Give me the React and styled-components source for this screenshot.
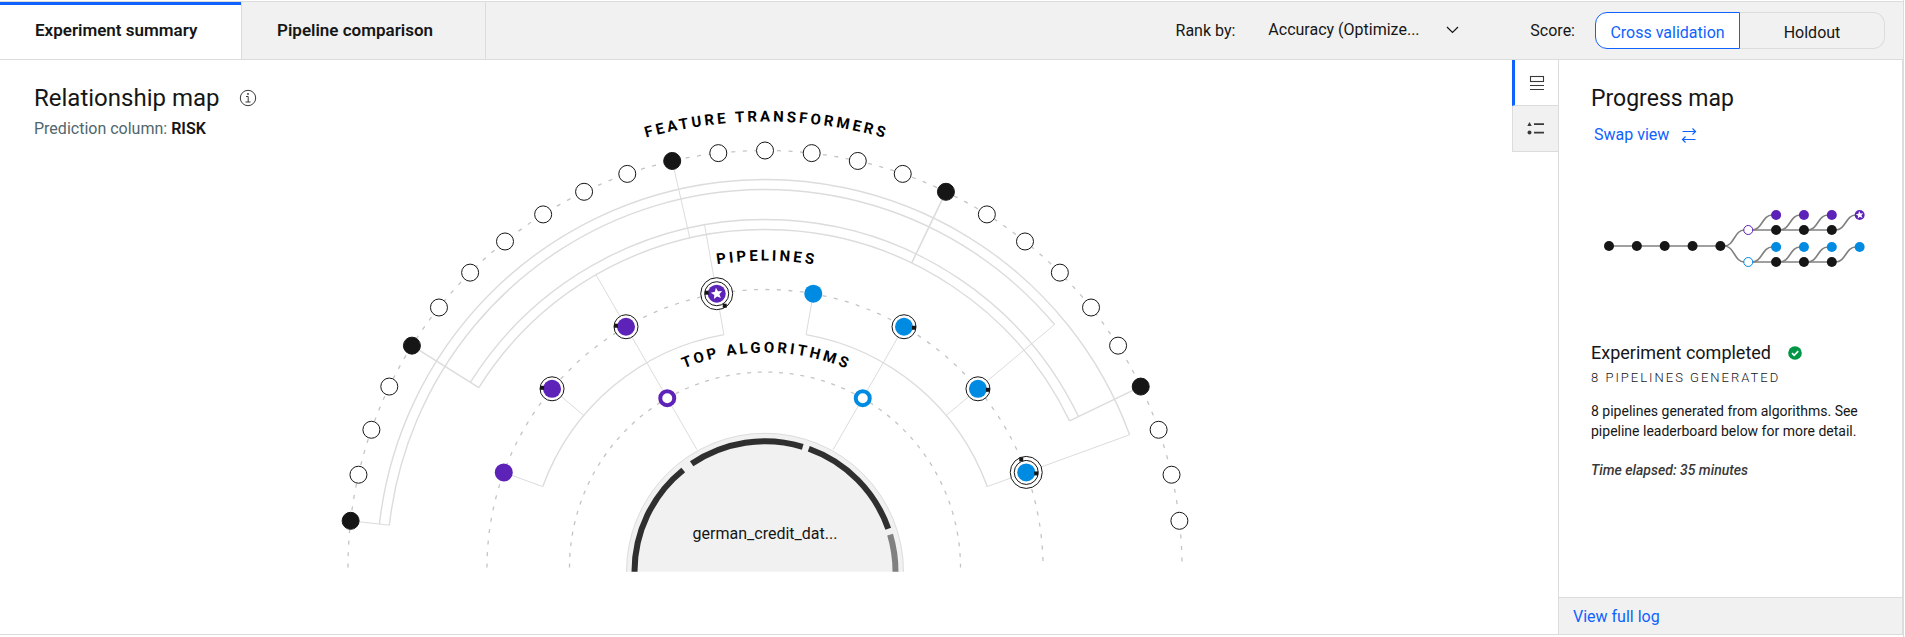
import React from 'react';
import styled, { createGlobalStyle } from 'styled-components';

const c = {
  ink: '#161616',
  soft: '#393939',
  blue: '#0f62fe',
  line: '#dcdcdc',
  shade: '#f1f1f1',
  purple: '#5d22b8',
  sky: '#008be3',
  green: '#009645',
};

const GlobalStyle = createGlobalStyle`
  *, *::before, *::after { box-sizing: border-box; }
  body {
    margin: 0;
    background: #fff;
    color: ${c.ink};
    font-family: Roboto, "Noto Sans", sans-serif;
    font-size: 16px;
  }
  button, select { font: inherit; color: inherit; }
`;

const Page = styled.div`
  display: flex;
  flex-direction: column;
  min-height: 100vh;
  margin-right: 1px;
  padding: 1px 0 2px;
  border-right: 1px solid ${c.line};
`;

const Header = styled.header`
  display: flex;
  height: 59px;
  background: ${c.shade};
  border: solid ${c.line};
  border-width: 1px 0;
`;

const Tabs = styled.nav`
  display: flex;
`;

const Tab = styled.button`
  padding: 0 0 2px 35px;
  width: ${(p) => (p.$active ? 242 : 244)}px;
  text-align: left;
  font-size: 17px;
  font-weight: 600;
  background: ${(p) => (p.$active ? '#fff' : 'transparent')};
  border: 0 solid ${c.line};
  border-right-width: 1px;
  box-shadow: ${(p) => (p.$active ? `inset 0 3px 0 ${c.blue}` : 'none')};
`;

const Controls = styled.div`
  display: flex;
  align-items: center;
  margin-left: auto;
  padding-right: 18px;
`;

const Label = styled.label`
  padding-bottom: 1px;
  margin-right: ${(p) => p.$gap}px;
`;

const SelectBox = styled.div`
  display: flex;
  align-items: center;
  width: 192px;
  margin-right: 70px;
  padding-bottom: 2px;

  svg {
    flex: none;
    margin-left: -16px;
    pointer-events: none;
  }
`;

const Select = styled.select`
  appearance: none;
  width: 100%;
  padding: 0;
  border: 0;
  background: transparent;
`;

const Switch = styled.div`
  display: flex;
  height: 37px;
`;

const SwitchButton = styled.button`
  width: 145px;
  padding: 3px 0 0;
  color: ${(p) => (p.$active ? c.blue : c.ink)};
  background: ${(p) => (p.$active ? '#fff' : 'transparent')};
  border: 1px solid ${(p) => (p.$active ? c.blue : c.line)};
  border-radius: ${(p) => (p.$active ? '12px 0 0 12px' : '0 12px 12px 0')};
  border-left-width: ${(p) => (p.$active ? 1 : 0)}px;
`;

const Body = styled.div`
  display: flex;
  flex: 1;
  border: solid ${c.line};
  border-width: 0 1px 1px 0;
`;

const Main = styled.main`
  display: grid;
  flex: 1;
  min-width: 0;

  > * { grid-area: 1 / 1; }
`;

const MapIntro = styled.div`
  padding: 23px 0 0 34px;
`;

const TitleRow = styled.div`
  display: flex;
  align-items: center;
  gap: 20px;
`;

const Title = styled.h2`
  margin: 0;
  font-size: ${(p) => p.$size}px;
  line-height: 30px;
  font-weight: 400;
`;

const Prediction = styled.p`
  margin: 6px 0 0;
  font-size: 16px;
  line-height: 20px;
  color: #50666d;

  strong { color: ${c.ink}; font-weight: 600; }
`;

const ChartArea = styled.div`
  display: flex;
  justify-content: center;
  padding: 40px 0 0 18px;
`;

const Chart = styled.svg`
  display: block;
  flex: none;
`;

const RingTitle = styled.text`
  font-size: 15px;
  font-weight: 700;
  letter-spacing: 3px;
  fill: #000;
`;

const Rail = styled.div`
  display: flex;
  flex-direction: column;
  flex: none;
  width: 46px;
`;

const RailButton = styled.button`
  display: flex;
  align-items: center;
  justify-content: center;
  height: 46px;
  padding: 0;
  background: ${(p) => (p.$active ? '#fff' : c.shade)};
  border: 0 solid ${c.line};
  border-bottom-width: 1px;
  border-left: ${(p) => (p.$active ? `3px solid ${c.blue}` : `1px solid ${c.line}`)};
`;

const Panel = styled.aside`
  display: flex;
  flex-direction: column;
  flex: none;
  width: 344px;
  border-left: 1px solid ${c.line};
`;

const PanelBody = styled.div`
  flex: 1;
  padding: 24px 32px 0;
`;

const SwapButton = styled.button`
  display: flex;
  align-items: center;
  gap: 12px;
  margin: 10px 0 0 3px;
  padding: 0;
  line-height: 22px;
  color: ${c.blue};
  background: none;
  border: 0;
`;

const ProgressChart = styled.svg`
  display: block;
  margin: 61px 0 70px 10px;
`;

const Status = styled.h3`
  display: flex;
  align-items: center;
  gap: 17px;
  margin: 0;
  font-size: 18px;
  line-height: 24px;
  font-weight: 400;
`;

const Count = styled.p`
  margin: 4px 0 0;
  font-size: 13px;
  line-height: 18px;
  font-weight: 300;
  letter-spacing: 2px;
  color: ${c.ink};
`;

const Note = styled.p`
  margin: 14px 0 0;
  font-size: 14px;
  line-height: 20px;
`;

const Elapsed = styled.p`
  margin: 19px 0 0;
  font-size: 14px;
  line-height: 20px;
  font-weight: 500;
  font-style: italic;
  color: ${c.soft};
`;

const PanelFooter = styled.footer`
  display: flex;
  align-items: center;
  height: 37px;
  padding-left: 14px;
  background: ${c.shade};
  border-top: 1px solid ${c.line};

  a { color: ${c.blue}; text-decoration: none; }
`;

/* Relationship map geometry: every ring shares this centre. */
const CX = 430;
const CY = 467.5;
const STEP = 180 / 28;

const at = (r, deg) => {
  const a = (deg * Math.PI) / 180;
  return [CX + r * Math.sin(a), CY - r * Math.cos(a)];
};

const arcPath = (r, from, to, cy = CY) => {
  const [x1, y1] = at(r, from);
  const [x2, y2] = at(r, to);
  const dy = cy - CY;
  return `M${x1} ${y1 + dy}A${r} ${r} 0 0 1 ${x2} ${y2 + dy}`;
};

const Spoke = ({ deg, from, to, w = 1 }) => {
  const [x1, y1] = at(from, deg);
  const [x2, y2] = at(to, deg);
  return <line x1={x1} y1={y1} x2={x2} y2={y2} stroke={c.line} strokeWidth={w} />;
};

const star = (r) =>
  Array.from({ length: 10 }, (_, i) => {
    const a = (i * Math.PI) / 5;
    const q = i % 2 ? r * 0.45 : r;
    return `${q * Math.sin(a)},${-q * Math.cos(a)}`;
  }).join(' ');

const FILLED = [-13, -9, -2, 4, 10];

const PIPELINES = [
  { deg: -70, color: c.purple, marks: [] },
  { deg: -50, color: c.purple, marks: [[-10, -1]] },
  { deg: -30, color: c.purple, marks: [[-10, -1]] },
  { deg: -10, color: c.purple, marks: [[-10, -1], [8, 12]], best: true },
  { deg: 10, color: c.sky, marks: [] },
  { deg: 30, color: c.sky, marks: [[10, 1]] },
  { deg: 50, color: c.sky, marks: [[10, 1]] },
  { deg: 70, color: c.sky, marks: [[10, 1], [-5, -13]] },
];

const CORE = [
  [-90, -38.8, '#2f2f2f'],
  [-34.2, 16.8, '#2f2f2f'],
  [19.6, 70.8, '#2f2f2f'],
  [73.5, 90, '#808080'],
];
const CORE_Y = 471.7;

function RelationshipMap() {
  return (
    <Chart width="860" height="490" viewBox="0 0 860 490" role="img" aria-label="Relationship map">
      <g fill="none" stroke="#c4c4c4" strokeWidth="1.3" strokeDasharray="4 7.5">
        <path d={arcPath(417, -90, 90)} />
        <path d={arcPath(278, -90, 90)} />
        <path d={arcPath(195.5, -90, 90)} strokeDasharray="4 6.7" />
      </g>

      <g fill="none" stroke={c.line} strokeWidth="1.4">
        <path d={arcPath(388, -13 * STEP, 70)} />
        <path d={arcPath(378, -13 * STEP, 50)} />
        <path d={arcPath(348, -9 * STEP, 10 * STEP)} />
        <path d={arcPath(338, -9 * STEP, 10 * STEP)} />
        <path d={arcPath(236.5, -70, -10)} />
        <path d={arcPath(236.5, 10, 70)} />
      </g>

      <Spoke deg={-13 * STEP} from={417} to={378} />
      <Spoke deg={-9 * STEP} from={417} to={338} w={1.5} />
      <Spoke deg={-2 * STEP} from={417} to={338} />
      <Spoke deg={4 * STEP} from={417} to={338} w={1.6} />
      <Spoke deg={10 * STEP} from={417} to={338} w={1.5} />
      <Spoke deg={-70} from={278} to={236.5} />
      <Spoke deg={-50} from={278} to={236.5} />
      <Spoke deg={-30} from={338} to={136} />
      <Spoke deg={-10} from={348} to={236.5} />
      <Spoke deg={10} from={278} to={236.5} />
      <Spoke deg={30} from={278} to={136} />
      <Spoke deg={50} from={378} to={236.5} />
      <Spoke deg={70} from={388} to={236.5} />

      {Array.from({ length: 27 }, (_, i) => i - 13).map((i) => {
        const [x, y] = at(417, i * STEP);
        return (
          <circle key={i} cx={x} cy={y} r="8.5" stroke={c.ink} fill={FILLED.includes(i) ? c.ink : '#fff'} />
        );
      })}

      {PIPELINES.map(({ deg, color, marks, best }) => {
        const [x, y] = at(278, deg);
        return (
          <g key={deg} transform={`translate(${x} ${y})`}>
            {marks.length > 1 && <circle r="16" fill="#fff" stroke={c.ink} />}
            {marks.length > 0 && <circle r="12" fill="#fff" stroke={c.ink} />}
            <circle r="9" fill={color} />
            {marks.map(([mx, my]) => (
              <rect key={mx} x={mx - 2} y={my - 2} width="4" height="4" fill={c.ink} />
            ))}
            {best && <polygon points={star(6)} fill="#fff" transform="rotate(-8)" />}
          </g>
        );
      })}

      {[[-30, c.purple], [30, c.sky]].map(([deg, color]) => {
        const [x, y] = at(195.5, deg);
        return <circle key={deg} cx={x} cy={y} r="7" fill="#fff" stroke={color} strokeWidth="4" />;
      })}

      <path d={arcPath(138.5, -90, 90, CORE_Y)} fill={c.shade} stroke={c.line} />
      {CORE.map(([from, to, color]) => (
        <path key={from} d={arcPath(130.5, from, to, CORE_Y)} fill="none" stroke={color} strokeWidth="6" />
      ))}
      <text x={CX} y="439" textAnchor="middle" fontSize="16" fill={c.ink}>german_credit_dat...</text>

      <defs>
        <path id="features-arc" d={arcPath(446, -89.8, 90.2)} />
        <path id="pipelines-arc" d={arcPath(307, -89.7, 90.3)} />
        <path id="algorithms-arc" d={arcPath(215, -89.6, 90.4)} />
      </defs>
      <RingTitle textAnchor="middle"><textPath href="#features-arc" startOffset="50%">FEATURE TRANSFORMERS</textPath></RingTitle>
      <RingTitle textAnchor="middle"><textPath href="#pipelines-arc" startOffset="50%">PIPELINES</textPath></RingTitle>
      <RingTitle textAnchor="middle"><textPath href="#algorithms-arc" startOffset="50%">TOP ALGORITHMS</textPath></RingTitle>
    </Chart>
  );
}

const COL = (n) => 8 + n * 27.85;
const BRANCHES = [
  { color: c.purple, top: 8, base: 23, best: true },
  { color: c.sky, top: 40, base: 55 },
];

const curve = (x1, y1, x2, y2) => {
  const mid = (x1 + x2) / 2;
  return `M${x1} ${y1}C${mid} ${y1} ${mid} ${y2} ${x2} ${y2}`;
};

function ProgressMap() {
  return (
    <ProgressChart width="268" height="64" viewBox="0 0 268 64" role="img" aria-label="Progress map">
      <g fill="none" stroke="#808080" strokeWidth="1.6">
        <path d={`M${COL(0)} 39H${COL(4)}`} />
        {BRANCHES.map(({ top, base }) => (
          <g key={base}>
            <path d={curve(COL(4) + 4, 39, COL(5) - 4, base)} />
            <path d={`M${COL(5)} ${base}H${COL(8)}`} />
            {[5, 6, 7, 8].map((n) => (
              <path key={n} d={curve(COL(n) + 4, base, COL(n + 1) - 4, top)} />
            ))}
          </g>
        ))}
      </g>
      {[0, 1, 2, 3, 4].map((n) => <circle key={n} cx={COL(n)} cy="39" r="5" fill={c.ink} />)}
      {BRANCHES.map(({ color, top, base, best }) => (
        <g key={base}>
          <circle cx={COL(5)} cy={base} r="4.5" fill="#fff" stroke={color} />
          {[6, 7, 8].map((n) => <circle key={n} cx={COL(n)} cy={base} r="5" fill={c.ink} />)}
          {[6, 7, 8, 9].map((n) => <circle key={n} cx={COL(n)} cy={top} r="5" fill={color} />)}
          {best && <polygon points={star(4)} fill="#fff" transform={`translate(${COL(9)} ${top}) rotate(-8)`} />}
        </g>
      ))}
    </ProgressChart>
  );
}

const InfoIcon = () => (
  <svg width="18" height="18" viewBox="0 0 18 18" fill="none" stroke={c.soft} aria-hidden="true">
    <circle cx="9" cy="9" r="7.7" />
    <path d="M7 7.5h2.2V13M6.5 13h5" />
    <circle cx="9" cy="5" r="0.9" fill={c.soft} stroke="none" />
  </svg>
);

const ChevronIcon = () => (
  <svg width="16" height="16" viewBox="0 0 16 16" fill="none" stroke={c.ink} strokeWidth="1.2" aria-hidden="true">
    <path d="M3 5l5.5 5.5L14 5" />
  </svg>
);

const CardsIcon = () => (
  <svg width="16" height="16" viewBox="0 0 16 16" fill="none" stroke={c.soft} strokeWidth="1.1" aria-hidden="true">
    <rect x="1.5" y="1.5" width="13" height="5" />
    <path d="M1 10.5h14M1 14.5h14" />
  </svg>
);

const LegendIcon = () => (
  <svg width="18" height="16" viewBox="0 0 18 16" fill={c.soft} aria-hidden="true">
    <path d="M2.500 1L4.700 5H0.300z" />
    <circle cx="2.500" cy="11.500" r="2" />
    <path d="M7 2.200H17v1.800H7zM7 10.800H17v1.800H7z" />
  </svg>
);

const SwapIcon = () => (
  <svg width="16" height="16" viewBox="0 0 16 16" fill="none" stroke={c.blue} strokeWidth="1.2" aria-hidden="true">
    <path d="M1.5 4.5h13M11.500 1.500l3 3L11.500 7.500" />
    <path d="M14.5 12.5h-13M4.500 9.500L1.500 12.500 4.500 15.500" />
  </svg>
);

const CheckIcon = () => (
  <svg width="14" height="14" viewBox="0 0 14 14" aria-hidden="true">
    <circle cx="7" cy="7" r="6.8" fill={c.green} />
    <path d="M4 7.200l2.200 2.200L10.200 5.200" fill="none" stroke="#fff" strokeWidth="1.7" />
  </svg>
);

export default function App() {
  return (
    <>
      <GlobalStyle />
      <Page>
        <Header>
          <Tabs>
            <Tab $active aria-current="page">Experiment summary</Tab>
            <Tab>Pipeline comparison</Tab>
          </Tabs>
          <Controls>
            <Label htmlFor="rank" $gap={33}>Rank by:</Label>
            <SelectBox>
              <Select id="rank" defaultValue="accuracy">
                <option value="accuracy">Accuracy (Optimize...</option>
              </Select>
              <ChevronIcon />
            </SelectBox>
            <Label as="span" id="score-label" $gap={20}>Score:</Label>
            <Switch role="group" aria-labelledby="score-label">
              <SwitchButton $active aria-pressed="true">Cross validation</SwitchButton>
              <SwitchButton aria-pressed="false">Holdout</SwitchButton>
            </Switch>
          </Controls>
        </Header>
        <Body>
          <Main>
            <MapIntro>
              <TitleRow>
                <Title $size={24}>Relationship map</Title>
                <InfoIcon />
              </TitleRow>
              <Prediction>Prediction column: <strong>RISK</strong></Prediction>
            </MapIntro>
            <ChartArea>
              <RelationshipMap />
            </ChartArea>
          </Main>
          <Rail>
            <RailButton $active aria-label="Progress panel"><CardsIcon /></RailButton>
            <RailButton aria-label="Legend panel"><LegendIcon /></RailButton>
          </Rail>
          <Panel>
            <PanelBody>
              <Title $size={23}>Progress map</Title>
              <SwapButton>Swap view <SwapIcon /></SwapButton>
              <ProgressMap />
              <Status>Experiment completed <CheckIcon /></Status>
              <Count>8 PIPELINES GENERATED</Count>
              <Note>8 pipelines generated from algorithms. See pipeline leaderboard below for more detail.</Note>
              <Elapsed>Time elapsed: 35 minutes</Elapsed>
            </PanelBody>
            <PanelFooter>
              <a href="#log">View full log</a>
            </PanelFooter>
          </Panel>
        </Body>
      </Page>
    </>
  );
}
